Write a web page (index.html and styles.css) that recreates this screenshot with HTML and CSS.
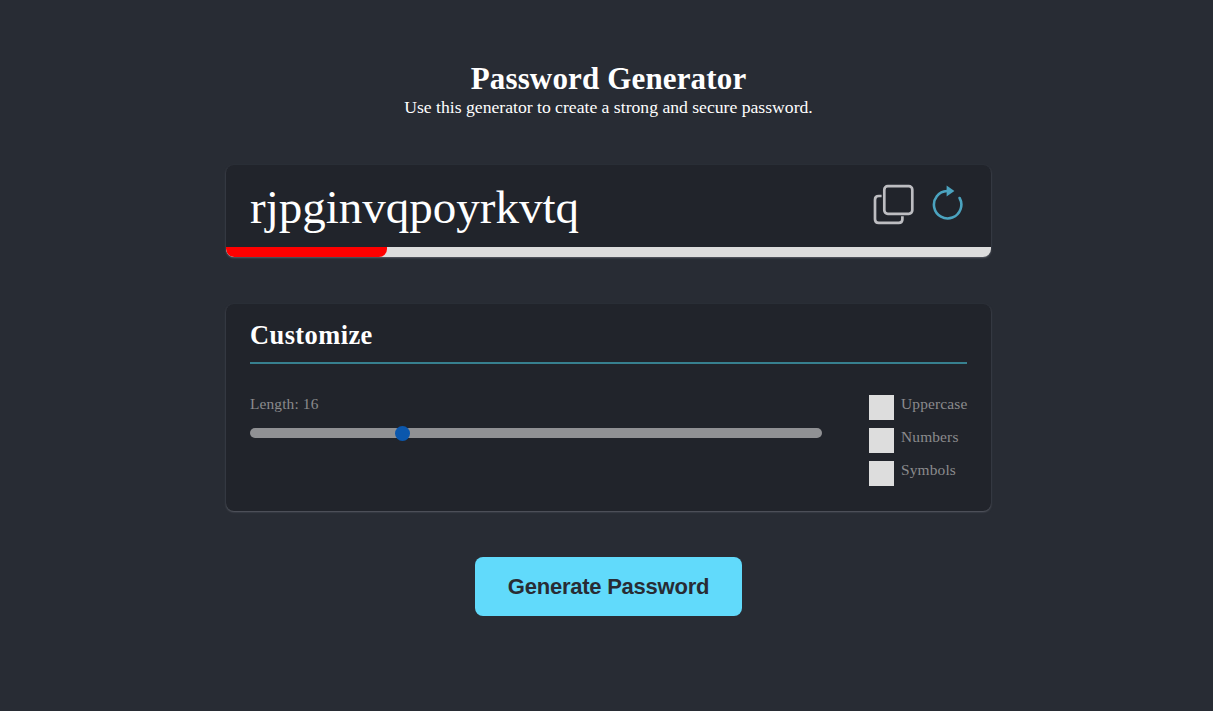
FILE: index.html
```html
<!DOCTYPE html>
<html lang="en">
<head>
<meta charset="utf-8">
<title>Password Generator</title>
<link rel="stylesheet" href="styles.css">
</head>
<body>
<main class="container">
  <header class="header">
    <h1 class="title"><span>Password Generator</span></h1>
    <p class="subtitle"><span>Use this generator to create a strong and secure password.</span></p>
  </header>
  <section class="card result">
    <div class="result-row">
      <span class="password">rjpginvqpoyrkvtq</span>
      <div class="actions">
        <svg class="copy-icon" width="42" height="42" viewBox="0 0 42 42" fill="none" stroke="#bdbdc1" stroke-width="2.7" stroke-linecap="butt">
          <rect x="11.3" y="3.2" width="28" height="27.6" rx="3.5"/>
          <path d="M8.6 13H5.7Q2 13 2 16.7V36.2Q2 39.9 5.7 39.9H25.7Q29.4 39.9 29.4 36.2V33.2"/>
        </svg>
        <svg class="refresh-icon" width="34" height="36" viewBox="0 0 34 36">
          <path d="M28.6 13A13.7 13.7 0 1 1 16 6" fill="none" stroke="#4ba3bf" stroke-width="2.6" stroke-linecap="round"/>
          <path d="M15.6 .6 23.4 5.9 15.6 11.6Z" fill="#4ba3bf"/>
        </svg>
      </div>
    </div>
    <div class="strength"><div class="strength-fill"></div></div>
  </section>
  <section class="card customize">
    <h2 class="card-title">Customize</h2>
    <div class="options">
      <div class="length">
        <label class="label" for="length">Length: 16</label>
        <input class="slider" id="length" type="range" min="4" max="50" value="16">
      </div>
      <div class="checks">
        <label class="check"><input class="box" type="checkbox"><span>Uppercase</span></label>
        <label class="check"><input class="box" type="checkbox"><span>Numbers</span></label>
        <label class="check"><input class="box" type="checkbox"><span>Symbols</span></label>
      </div>
    </div>
  </section>
  <button class="generate">Generate Password</button>
</main>
</body>
</html>
```
FILE: styles.css
```css
* { box-sizing: border-box; margin: 0; padding: 0; }
body {
  height: 711px;
  overflow: hidden;
  background: #282c34;
  color: #fff;
  font-family: "Liberation Serif", "Times New Roman", serif;
}
.container {
  width: 765px;
  margin-left: 226px;
  padding-top: 60px;
  display: flex;
  flex-direction: column;
  align-items: center;
}
.header { height: 105px; text-align: center; }
.title { font-size: 31px; line-height: 37px; letter-spacing: .15px; }
.subtitle { font-size: 17.65px; line-height: 20px; }
.card {
  width: 765px;
  border-radius: 8px;
  background: #21242b;
  box-shadow: 0 1px 2px #5a5d66;
}
.result { height: 92px; overflow: hidden; }
.result-row {
  height: 82px;
  padding: 0 24px;
  display: flex;
  justify-content: space-between;
}
.password { font-size: 47px; line-height: 84px; }
.actions { display: flex; gap: 16px; padding: 18px 2px 0 0; }
.refresh-icon { margin-top: 2px; }
.strength { height: 10px; background: #ddd; }
.strength-fill { width: 161px; height: 10px; background: #f00; border-radius: 0 0 8px 8px; }
.customize { height: 207px; margin-top: 47px; padding: 16px 24px; }
.card-title {
  height: 44px;
  border-bottom: 2px solid #37808f;
  font-size: 26.4px;
  line-height: 31px;
  letter-spacing: .45px;
}
.options { display: flex; justify-content: space-between; }
.length { width: 572px; padding-top: 30px; }
.label { display: block; height: 34px; font-size: 15.4px; letter-spacing: .14px; line-height: 20px; color: #8b8b8d; }
.slider {
  display: block;
  width: 572px;
  height: 10px;
  border-radius: 5px;
  background: #909194;
  appearance: none;
}
.slider::-webkit-slider-thumb {
  appearance: none;
  width: 15px;
  height: 15px;
  border-radius: 50%;
  background: #0b57ad;
}
.checks { width: 98px; padding-top: 31px; }
.check { display: flex; gap: 7px; height: 33px; font-size: 15.4px; letter-spacing: .16px; line-height: 18px; color: #8b8b8d; }
.box { appearance: none; width: 25px; height: 25px; background: #ddd; flex: none; }
.generate {
  width: 267px;
  height: 59px;
  margin-top: 46px;
  border: 0;
  border-radius: 8px;
  background: #61dafb;
  color: #282c34;
  font: bold 22px "Liberation Sans", Arial, sans-serif;
  letter-spacing: -.24px;
}
```
